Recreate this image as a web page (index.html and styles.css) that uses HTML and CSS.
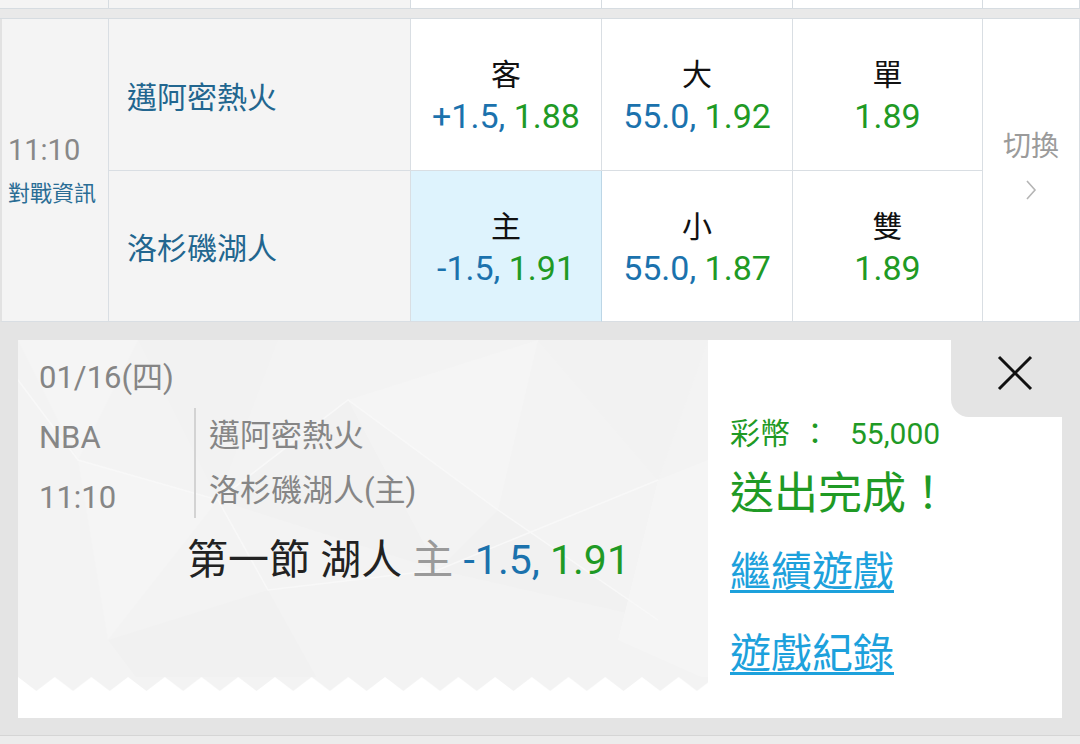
FILE: index.html
```html
<!DOCTYPE html>
<html lang="zh-Hant">

<head>
    <meta charset="UTF-8">
    <meta name="viewport" content="width=device-width, initial-scale=1.0">
    <title>投注完成</title>
    <link rel="stylesheet" href="styles.css">
</head>

<body>
    <div class="board">
        <div class="prev-row">
            <div class="cell grey"></div>
            <div class="cell grey"></div>
            <div class="cell"></div>
            <div class="cell"></div>
            <div class="cell"></div>
            <div class="cell"></div>
        </div>
        <div class="band"></div>

        <div class="match">
            <div class="time-cell">
                <div class="time">11:10</div>
                <div class="info-link">對戰資訊</div>
            </div>
            <div class="team">邁阿密熱火</div>
            <div class="odd">
                <div class="odd-label">客</div>
                <div class="odd-value"><span class="blue">+1.5,</span> <span class="green">1.88</span></div>
            </div>
            <div class="odd">
                <div class="odd-label">大</div>
                <div class="odd-value"><span class="blue">55.0,</span> <span class="green">1.92</span></div>
            </div>
            <div class="odd">
                <div class="odd-label">單</div>
                <div class="odd-value"><span class="green">1.89</span></div>
            </div>
            <div class="switch">
                <div class="switch-label">切換</div>
                <svg class="chevron" width="12" height="22" viewBox="0 0 12 22">
                    <polyline points="2,2 10,11 2,20" fill="none" stroke="#b5b5b5" stroke-width="1.6" />
                </svg>
            </div>

            <div class="team">洛杉磯湖人</div>
            <div class="odd selected">
                <div class="odd-label">主</div>
                <div class="odd-value"><span class="blue">-1.5,</span> <span class="green">1.91</span></div>
            </div>
            <div class="odd">
                <div class="odd-label">小</div>
                <div class="odd-value"><span class="blue">55.0,</span> <span class="green">1.87</span></div>
            </div>
            <div class="odd">
                <div class="odd-label">雙</div>
                <div class="odd-value"><span class="green">1.89</span></div>
            </div>
        </div>
    </div>

    <div class="sheet">
        <div class="ticket">
            <div class="ticket-left">
                <div class="ticket-body">
                    <!-- faint low-poly backdrop -->
                    <svg class="poly" width="690" height="340" viewBox="0 0 690 340">
                        <polygon points="0,0 120,0 60,120" fill="#f5f5f5" />
                        <polygon points="120,0 260,0 200,160" fill="#f2f2f2" />
                        <polygon points="60,120 200,160 90,300" fill="#f5f5f5" />
                        <polygon points="200,160 330,60 420,230" fill="#f1f1f1" />
                        <polygon points="330,60 520,0 480,170" fill="#f5f5f5" />
                        <polygon points="420,230 480,170 640,280" fill="#f1f1f1" />
                        <polygon points="520,0 690,0 640,140" fill="#f2f2f2" />
                        <polygon points="640,140 690,120 690,340 600,300" fill="#f5f5f5" />
                        <polygon points="90,300 250,250 300,340 120,340" fill="#f1f1f1" />
                        <polyline points="0,40 60,120 200,160 330,60 480,170 640,280" fill="none" stroke="#f8f8f8" stroke-width="1.5" />
                        <polyline points="200,160 250,250 420,230 640,140" fill="none" stroke="#f8f8f8" stroke-width="1.5" />
                    </svg>

                    <div class="date">01/16(四)</div>
                    <div class="info">
                        <div class="meta">
                            <div>NBA</div>
                            <div>11:10</div>
                        </div>
                        <div class="teams">
                            <div>邁阿密熱火</div>
                            <div>洛杉磯湖人(主)</div>
                        </div>
                    </div>
                    <div class="pick">第一節 湖人 <span class="grey-text">主</span> <span class="blue">-1.5,</span> <span class="green">1.91</span></div>
                </div>
                <svg class="teeth" width="690" height="14" viewBox="0 0 690 14">
                    <defs>
                        <pattern id="zig" width="36.7" height="14" patternUnits="userSpaceOnUse">
                            <path d="M0 0H36.7L18.35 14Z" fill="#f3f3f3" />
                        </pattern>
                    </defs>
                    <rect width="690" height="14" fill="url(#zig)" />
                </svg>
            </div>

            <div class="ticket-right">
                <div class="close-row">
                    <div class="close">
                        <svg width="38" height="38" viewBox="0 0 38 38">
                            <path d="M3 3L35 35M35 3L3 35" stroke="#111" stroke-width="3" />
                        </svg>
                    </div>
                </div>
                <div class="coins">彩幣<span class="colon">：</span>55,000</div>
                <div class="done">送出完成！</div>
                <a class="link first" href="#">繼續遊戲</a>
                <a class="link" href="#">遊戲紀錄</a>
            </div>
        </div>
    </div>
    <div class="foot"></div>
</body>

</html>
```

FILE: styles.css
```css
* {
    margin: 0;
    padding: 0;
    box-sizing: border-box;
}

body {
    width: 1080px;
    height: 744px;
    overflow: hidden;
    background: #e4e4e4;
    font-family: Roboto, "Noto Sans CJK TC", sans-serif;
    color: #111;
}

.blue {
    color: #1b72ad;
}

.green {
    color: #1f9a25;
}

.grey-text {
    color: #9a9a9a;
}

/* odds table */
.board {
    background: #fff;
}

.prev-row {
    display: grid;
    grid-template-columns: 109px 302px 191px 191px 190px 97px;
    height: 9px;
    border-bottom: 1px solid #d6dce1;
}

.prev-row .cell {
    border-right: 1px solid #d6dce1;
    background: #fff;
}

.prev-row .cell.grey {
    background: #f4f4f4;
}

.band {
    height: 10px;
    background: #e9e9e9;
    border-bottom: 1px solid #d6dce1;
}

.match {
    display: grid;
    grid-template-columns: 109px 302px 191px 191px 190px 97px;
    grid-template-rows: 152px 151px;
}

.match > div {
    border-right: 1px solid #d9dee3;
    border-bottom: 1px solid #d9dee3;
}

.time-cell {
    grid-row: span 2;
    background: #f4f4f4;
    display: flex;
    flex-direction: column;
    justify-content: center;
    padding-left: 6px;
    border-left: 2px solid #e2e2e2;
}

.time {
    font-size: 29px;
    line-height: 36px;
    color: #888;
}

.info-link {
    margin-top: 11px;
    font-size: 22px;
    line-height: 30px;
    color: #2a6d95;
}

.team {
    background: #f4f4f4;
    display: flex;
    align-items: center;
    padding-left: 18px;
    font-size: 30px;
    color: #22668f;
}

.odd {
    background: #fff;
    display: flex;
    flex-direction: column;
    align-items: center;
    justify-content: center;
    padding-top: 3px;
}

.odd.selected {
    background: #def3fd;
    border-right-color: #bcd6e6 !important;
}

.odd-label {
    font-size: 30px;
    line-height: 38px;
}

.odd-value {
    margin-top: 2px;
    font-size: 34px;
    line-height: 40px;
}

.switch {
    grid-row: span 2;
    background: #fff;
    display: flex;
    flex-direction: column;
    align-items: center;
    justify-content: center;
    padding-bottom: 10px;
}

.switch-label {
    font-size: 28px;
    line-height: 34px;
    color: #9b9b9b;
}

.chevron {
    margin-top: 15px;
}

/* result ticket */
.sheet {
    height: 413px;
    padding: 18px 18px 0;
}

.ticket {
    display: flex;
    height: 378px;
    background: #fff;
}

.ticket-left {
    width: 690px;
    display: flex;
    flex-direction: column;
}

.ticket-body {
    position: relative;
    height: 337px;
    overflow: hidden;
    background: #f3f3f3;
    padding: 18px 0 0 21px;
}

.poly {
    position: absolute;
    left: 0;
    top: 0;
}

.ticket-body > div {
    position: relative;
}

.teeth {
    display: block;
}

.date {
    font-size: 31px;
    line-height: 40px;
    color: #858585;
}

.info {
    display: flex;
    align-items: flex-start;
    margin-top: 10px;
    color: #868686;
}

.meta {
    width: 155px;
    font-size: 31px;
    line-height: 60px;
}

.teams {
    border-left: 2px solid #d3d3d3;
    padding-left: 13px;
    font-size: 31px;
    line-height: 55px;
}

.pick {
    margin-top: 7px;
    padding-left: 148px;
    font-size: 41px;
    line-height: 50px;
    color: #222;
}

.ticket-right {
    flex: 1;
    display: flex;
    flex-direction: column;
    align-items: flex-start;
    padding-left: 22px;
}

.close-row {
    align-self: stretch;
    display: flex;
    justify-content: flex-end;
}

.close {
    width: 111px;
    height: 77px;
    background: #e4e4e4;
    border-bottom-left-radius: 18px;
    display: flex;
    align-items: center;
    justify-content: center;
    padding: 0 0 12px 16px;
}

.coins {
    font-size: 30px;
    line-height: 34px;
    color: #1f9a25;
}

.colon {
    margin: 0 20px 0 10px;
}

.done {
    margin-top: 18px;
    font-size: 44px;
    line-height: 50px;
    color: #1f9a25;
}

.link {
    margin-top: 28px;
    font-size: 41px;
    line-height: 50px;
    color: #1da1dc;
    text-decoration: underline;
    text-decoration-thickness: 3px;
    text-underline-offset: 4px;
}

.link + .link {
    margin-top: 32px;
}

.foot {
    height: 9px;
    border-top: 1px solid #d5d5d5;
    background: #ececec;
}
```
